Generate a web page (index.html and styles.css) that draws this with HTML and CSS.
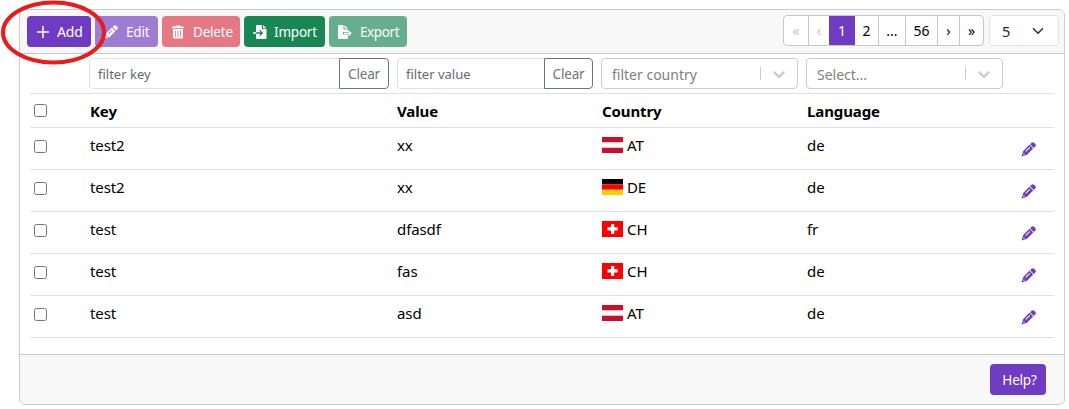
FILE: index.html
```
<!DOCTYPE html>
<html lang="en">
<head>
<meta charset="utf-8">
<title>Translations</title>
<link rel="stylesheet" href="styles.css">
</head>
<body>
<svg class="defs" aria-hidden="true">
  <symbol id="pencil" viewBox="0 0 16 16"><path d="M11.200.9a2 2 0 0 1 2.800 0L15.200 2a2 2 0 0 1 0 2.800l-1.500 1.500-4-4zM9 3 13 7 6.400 13.600 .5 15.500 2.400 9.600zM9 5.300 4.600 9.700l.8.8 4.400-4.400zM3 11.900l-.8 1.900 1.900-.8z" fill="currentColor" fill-rule="evenodd"/></symbol>
  <symbol id="at" viewBox="0 0 21 16"><path fill="#c8102e" d="M0 0h21v16H0z"/><path fill="#fff" d="M0 5.300h21v5.400H0z"/></symbol>
  <symbol id="de" viewBox="0 0 21 16"><path d="M0 0h21v5.300H0z"/><path fill="#f00" d="M0 5.300h21v5.400H0z"/><path fill="#fc0" d="M0 10.700h21V16H0z"/></symbol>
  <symbol id="ch" viewBox="0 0 21 16"><path fill="#f00" d="M0 0h21v16H0z"/><path fill="#fff" d="M9 3h3.200v3.300h3.400v3.200h-3.400V13H9V9.500H5.500V6.300H9z"/></symbol>
  <symbol id="chevron" viewBox="0 0 20 20"><path fill="currentColor" d="M4.516 7.548c.436-.446 1.043-.481 1.576 0L10 11.295l3.908-3.747c.533-.481 1.141-.446 1.574 0 .436.445.408 1.197 0 1.615l-4.695 4.502a1.095 1.095 0 0 1-1.576 0S4.924 9.581 4.516 9.163s-.436-1.170 0-1.615z"/></symbol>
</svg>
<main class="card">
  <header class="toolbar">
    <div class="actions">
      <button class="btn primary add"><svg class="icon" viewBox="0 0 14 14"><path d="M7 1v12M1 7h12" stroke="currentColor" stroke-width="1.500"/></svg><span>Add</span></button>
      <button class="btn primary off edit"><svg class="icon"><use href="#pencil"/></svg><span>Edit</span></button>
      <button class="btn danger off del"><svg class="icon" viewBox="0 0 14 14"><path fill="currentColor" fill-rule="evenodd" d="M5 .5h4l.6 1H13V3.200H1V1.500h3.400zM2 4h10v8.500a1 1 0 0 1-1 1H3a1 1 0 0 1-1-1zm2 1.500v6.500h.8V5.500zm2.600 0v6.500h.8V5.500zm2.600 0v6.500h.8V5.500z"/></svg><span>Delete</span></button>
      <button class="btn success import"><svg class="icon" viewBox="0 0 14 14"><path fill="currentColor" fill-rule="evenodd" d="M3 1a1 1 0 0 1 1-1h5v4h4.500v9a1 1 0 0 1-1 1H4a1 1 0 0 1-1-1V8.700h4.600L6.200 10.100l.9.9L10.300 8 7.100 4.900l-.9.9 1.400 1.500H3zM10 0l3.500 3.300H10zM0 7.300h3v1.400H0z"/></svg><span>Import</span></button>
      <button class="btn success off export"><svg class="icon" viewBox="0 0 14 14"><path fill="currentColor" d="M0 1a1 1 0 0 1 1-1h4.500v4.500H10V7H5v2.500h5V13a1 1 0 0 1-1 1H1a1 1 0 0 1-1-1zM6.500 0 10 3.600H6.500zM6 7.700h5.200L9.800 6.300l.8-.8L13.900 8.300l-3.300 2.900-.8-.8 1.400-1.500H6z"/></svg><span>Export</span></button>
    </div>
    <nav class="paging">
      <div class="pages">
        <a class="pg first dim">«</a><a class="pg prev dim">‹</a><a class="pg one">1</a><a class="pg two">2</a><a class="pg dots">...</a><a class="pg last">56</a><a class="pg next">›</a><a class="pg end">»</a>
      </div>
      <div class="size"><span>5</span><svg class="caret" viewBox="0 0 16 16"><path d="m2 5 6 6 6-6" fill="none" stroke="#343a40" stroke-width="2.200" stroke-linecap="round" stroke-linejoin="round"/></svg></div>
    </nav>
  </header>
  <section class="table">
    <div class="row filters">
      <span></span>
      <div class="group"><input class="field" placeholder="filter key"><button class="clear">Clear</button></div>
      <div class="group"><input class="field" placeholder="filter value"><button class="clear wide">Clear</button></div>
      <div class="select"><span>filter country</span><i class="bar"></i><svg class="arrow"><use href="#chevron"/></svg></div>
      <div class="select"><span>Select...</span><i class="bar"></i><svg class="arrow"><use href="#chevron"/></svg></div>
    </div>
    <div class="row head"><input type="checkbox" class="check"><b class="key">Key</b><b>Value</b><b class="land">Country</b><b class="lang">Language</b></div>
    <div class="row"><input type="checkbox" class="check"><span class="key">test2</span><span>xx</span><span class="land"><svg class="flag"><use href="#at"/></svg>AT</span><span class="lang">de</span><svg class="pen"><use href="#pencil"/></svg></div>
    <div class="row"><input type="checkbox" class="check"><span class="key">test2</span><span>xx</span><span class="land"><svg class="flag"><use href="#de"/></svg>DE</span><span class="lang">de</span><svg class="pen"><use href="#pencil"/></svg></div>
    <div class="row"><input type="checkbox" class="check"><span class="key">test</span><span>dfasdf</span><span class="land"><svg class="flag"><use href="#ch"/></svg>CH</span><span class="lang">fr</span><svg class="pen"><use href="#pencil"/></svg></div>
    <div class="row"><input type="checkbox" class="check"><span class="key">test</span><span>fas</span><span class="land"><svg class="flag"><use href="#ch"/></svg>CH</span><span class="lang">de</span><svg class="pen"><use href="#pencil"/></svg></div>
    <div class="row"><input type="checkbox" class="check"><span class="key">test</span><span>asd</span><span class="land"><svg class="flag"><use href="#at"/></svg>AT</span><span class="lang">de</span><svg class="pen"><use href="#pencil"/></svg></div>
  </section>
  <footer class="foot"><button class="btn primary help">Help?</button></footer>
</main>
<svg class="marker" viewBox="0 0 106 66"><ellipse cx="53.500" cy="32.500" rx="50.500" ry="30" fill="none" stroke="#e81c1c" stroke-width="4"/></svg>
</body>
</html>
```
FILE: styles.css
```
* { box-sizing: border-box; }
body { margin: 0; background: #fff; color: #000; font: 15px/24px "Noto Sans", "Open Sans", sans-serif; overflow: hidden; }
button, input { font: inherit; margin: 0; }
.defs { display: none; }
.card { margin: 9px 4px 0 19px; height: 396px; border: 1px solid #cbcbcb; border-radius: 6px; overflow: hidden; display: flex; flex-direction: column; }
.toolbar { height: 44px; flex: none; background: #f8f8f8; border-bottom: 1px solid #c8c8c8; display: flex; justify-content: space-between; align-items: flex-start; padding: 5px 5px 0 7px; }
.actions { display: flex; gap: 4px; padding-top: 1px; }
.btn { height: 31px; width: 64px; border: 0; border-radius: 4px; color: #fff; font-size: 13.5px; letter-spacing: -.2px; padding: 0 0 0 9px; display: flex; align-items: center; gap: 8px; white-space: nowrap; }
.add { gap: 7px; font-size: 14px; }
.icon { width: 14px; height: 14px; flex: none; }
.primary { background: #6f3bc2; }
.danger { background: #dc3545; }
.success { background: #198754; }
.off { opacity: .65; }
.edit { width: 63px; }
.del, .export { width: 78px; }
.import { width: 81px; gap: 7px; }
.export { letter-spacing: -.4px; }
.paging { display: flex; gap: 5px; }
.pages { display: flex; width: 201px; height: 31px; border: 1px solid #c8c8c8; border-radius: 4px; background: #fff; overflow: hidden; font-size: 14px; }
.pg { display: flex; align-items: center; justify-content: center; border-right: 1px solid #c8c8c8; height: 29px; padding-top: 1px; }
.dim { color: #bfc3c7; }
.first { width: 25px; }
.prev { width: 20px; border: 0; }
.one { width: 26px; background: #6f3bc2; color: #fff; border: 0; }
.two { width: 24px; }
.dots { width: 27px; }
.last { width: 32px; }
.next { width: 22px; }
.end { flex: 1; border: 0; }
.size { width: 70px; height: 31px; border: 1px solid #dee2e6; border-radius: 4px; background: #fff; display: flex; align-items: center; justify-content: space-between; padding: 0 14px 0 12px; color: #212529; font-size: 14.5px; }
.caret { width: 12px; height: 12px; }
.table { flex: 1; padding: 0 10px; }
.row { display: grid; grid-template-columns: 51px 300px 196px 197px 197px 1fr; column-gap: 8px; height: 42px; border-bottom: 1px solid #dee2e6; padding-top: 5px; }
.key, .land, .lang { padding-left: 1px; }
.row > span { letter-spacing: -.1px; }
.row b { font-size: 15px; letter-spacing: -.1px; }
.filters { height: 40px; padding-top: 4px; }
.head { height: 34px; }
.check { width: 13px; height: 13px; margin: 7px 0 0 4px; }
.head .check { margin-top: 5px; }
.group { display: flex; height: 31px; }
.field { flex: 1; min-width: 0; border: 1px solid #dee2e6; border-right: 0; border-radius: 4px 0 0 4px; padding: 0 8px; font-size: 13px; }
.field::placeholder { color: #646a70; opacity: 1; }
.clear { width: 50px; padding: 0; border: 1px solid #6c757d; border-radius: 0 4px 4px 0; background: #fff; color: #6c757d; font-size: 13.5px; letter-spacing: -.2px; }
.wide { width: 49px; }
.select { height: 31px; border: 1px solid #ccc; border-radius: 4px; display: flex; align-items: center; padding: 0 8px 0 10px; color: gray; font-size: 14px; }
.select span { flex: 1; padding-top: 2px; }
.bar { width: 1px; height: 13px; background: #ccc; margin: 0 8px 0 0; }
.arrow { width: 20px; height: 20px; color: #ccc; }
.land { display: flex; }
.flag { width: 21px; height: 16px; margin: 4px 4px 0 0; }
.pen { width: 15px; height: 15px; margin: 9px 0 0 10px; color: #6f3bc2; }
.foot { height: 50px; flex: none; background: #f8f8f8; border-top: 1px solid #c8c8c8; display: flex; justify-content: flex-end; padding: 9px 18px 0 0; }
.help { width: 56px; padding: 0 0 0 3px; justify-content: center; }
.marker { position: absolute; left: 0; top: 0; width: 106px; height: 66px; pointer-events: none; }
```
